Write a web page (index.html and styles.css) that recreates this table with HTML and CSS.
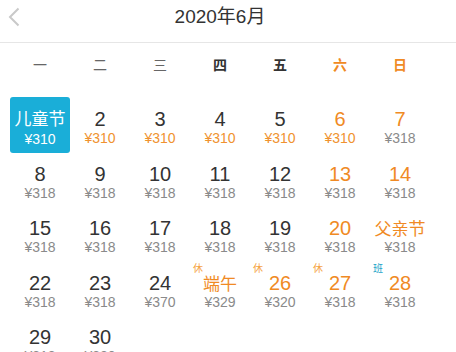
FILE: index.html
```html
<!DOCTYPE html>
<html lang="zh-CN">
<head>
<meta charset="utf-8">
<title>2020年6月</title>
<link rel="stylesheet" href="styles.css">
</head>
<body>
<div class="cal">
  <header class="head">
    <svg class="back" width="12" height="20" viewBox="0 0 12 20"><path d="M10.5 1.5 L2 10 L10.5 18.5" fill="none" stroke="#c9c9c9" stroke-width="2"/></svg>
    <div class="title">2020年6月</div>
  </header>
  <div class="weeks">
    <span>一</span><span>二</span><span>三</span><span class="dk">四</span><span class="dk">五</span><span class="we">六</span><span class="we">日</span>
  </div>
  <div class="days">
    <div class="cell sel"><div class="fest">儿童节</div><div class="price">¥310</div></div>
    <div class="cell"><div class="num">2</div><div class="price or">¥310</div></div>
    <div class="cell"><div class="num">3</div><div class="price or">¥310</div></div>
    <div class="cell"><div class="num">4</div><div class="price or">¥310</div></div>
    <div class="cell"><div class="num">5</div><div class="price or">¥310</div></div>
    <div class="cell"><div class="num or">6</div><div class="price or">¥310</div></div>
    <div class="cell"><div class="num or">7</div><div class="price">¥318</div></div>

    <div class="cell"><div class="num">8</div><div class="price">¥318</div></div>
    <div class="cell"><div class="num">9</div><div class="price">¥318</div></div>
    <div class="cell"><div class="num">10</div><div class="price">¥318</div></div>
    <div class="cell"><div class="num">11</div><div class="price">¥318</div></div>
    <div class="cell"><div class="num">12</div><div class="price">¥318</div></div>
    <div class="cell"><div class="num or">13</div><div class="price">¥318</div></div>
    <div class="cell"><div class="num or">14</div><div class="price">¥318</div></div>

    <div class="cell"><div class="num">15</div><div class="price">¥318</div></div>
    <div class="cell"><div class="num">16</div><div class="price">¥318</div></div>
    <div class="cell"><div class="num">17</div><div class="price">¥318</div></div>
    <div class="cell"><div class="num">18</div><div class="price">¥318</div></div>
    <div class="cell"><div class="num">19</div><div class="price">¥318</div></div>
    <div class="cell"><div class="num or">20</div><div class="price">¥318</div></div>
    <div class="cell"><div class="fest or">父亲节</div><div class="price">¥318</div></div>

    <div class="cell"><div class="num">22</div><div class="price">¥318</div></div>
    <div class="cell"><div class="num">23</div><div class="price">¥318</div></div>
    <div class="cell"><div class="num">24</div><div class="price">¥370</div></div>
    <div class="cell"><span class="tag rest">休</span><div class="fest or">端午</div><div class="price">¥329</div></div>
    <div class="cell"><span class="tag rest">休</span><div class="num or">26</div><div class="price">¥320</div></div>
    <div class="cell"><span class="tag rest">休</span><div class="num or">27</div><div class="price">¥318</div></div>
    <div class="cell"><span class="tag work">班</span><div class="num or">28</div><div class="price">¥318</div></div>

    <div class="cell"><div class="num">29</div><div class="price">¥318</div></div>
    <div class="cell"><div class="num">30</div><div class="price">¥320</div></div>
  </div>
</div>
</body>
</html>
```
FILE: styles.css
```css
* { box-sizing: border-box; }
html, body { margin: 0; padding: 0; background: #fff; }
body {
  font-family: "Liberation Sans", "Noto Sans CJK SC", sans-serif;
  color: #333;
  width: 456px;
  height: 352px;
  overflow: hidden;
}
.head {
  position: relative;
  height: 43px;
  border-bottom: 1px solid #e6e6e6;
  display: flex;
  align-items: flex-start;
  justify-content: center;
  padding-right: 16px;
}
.back {
  position: absolute;
  left: 8px;
  top: 7px;
}
.title {
  font-size: 19px;
  line-height: 22px;
  margin-top: 6px;
  color: #333;
}
.weeks {
  display: grid;
  grid-template-columns: repeat(7, 60px);
  padding-left: 10px;
  height: 42px;
  align-items: center;
  font-family: "Noto Sans CJK SC", sans-serif;
}
.weeks span {
  text-align: center;
  font-size: 14px;
  line-height: 16px;
  color: #666;
}
.weeks .dk { color: #333; font-weight: bold; }
.weeks .we { color: #f08a24; font-weight: bold; }
.days {
  display: grid;
  grid-template-columns: repeat(7, 60px);
  grid-auto-rows: 54.5px;
  padding-left: 10px;
  margin-top: 12px;
}
.cell {
  position: relative;
  display: flex;
  flex-direction: column;
  align-items: center;
  padding-top: 11px;
}
.num {
  font-size: 20px;
  line-height: 22px;
  color: #333;
}
.fest {
  font-family: "Noto Sans CJK SC", sans-serif;
  font-size: 17px;
  line-height: 22px;
}
.price {
  font-size: 14px;
  line-height: 16px;
  color: #8a8a8a;
}
.or { color: #f08a24; }
.price.or { color: #f0922e; }
.sel {
  background: #1aaed8;
  border-radius: 3px;
  height: 56px;
  padding-top: 10px;
  color: #fff;
}
.sel .fest {
  color: #fff;
  font-size: 17px;
}
.sel .price {
  color: #fff;
  margin-top: 2px;
}
.tag {
  position: absolute;
  top: 1px;
  left: 3px;
  font-family: "Noto Sans CJK SC", sans-serif;
  font-size: 10px;
  line-height: 12px;
}
.rest { color: #f5a446; }
.work { color: #1aa3c8; }
```
